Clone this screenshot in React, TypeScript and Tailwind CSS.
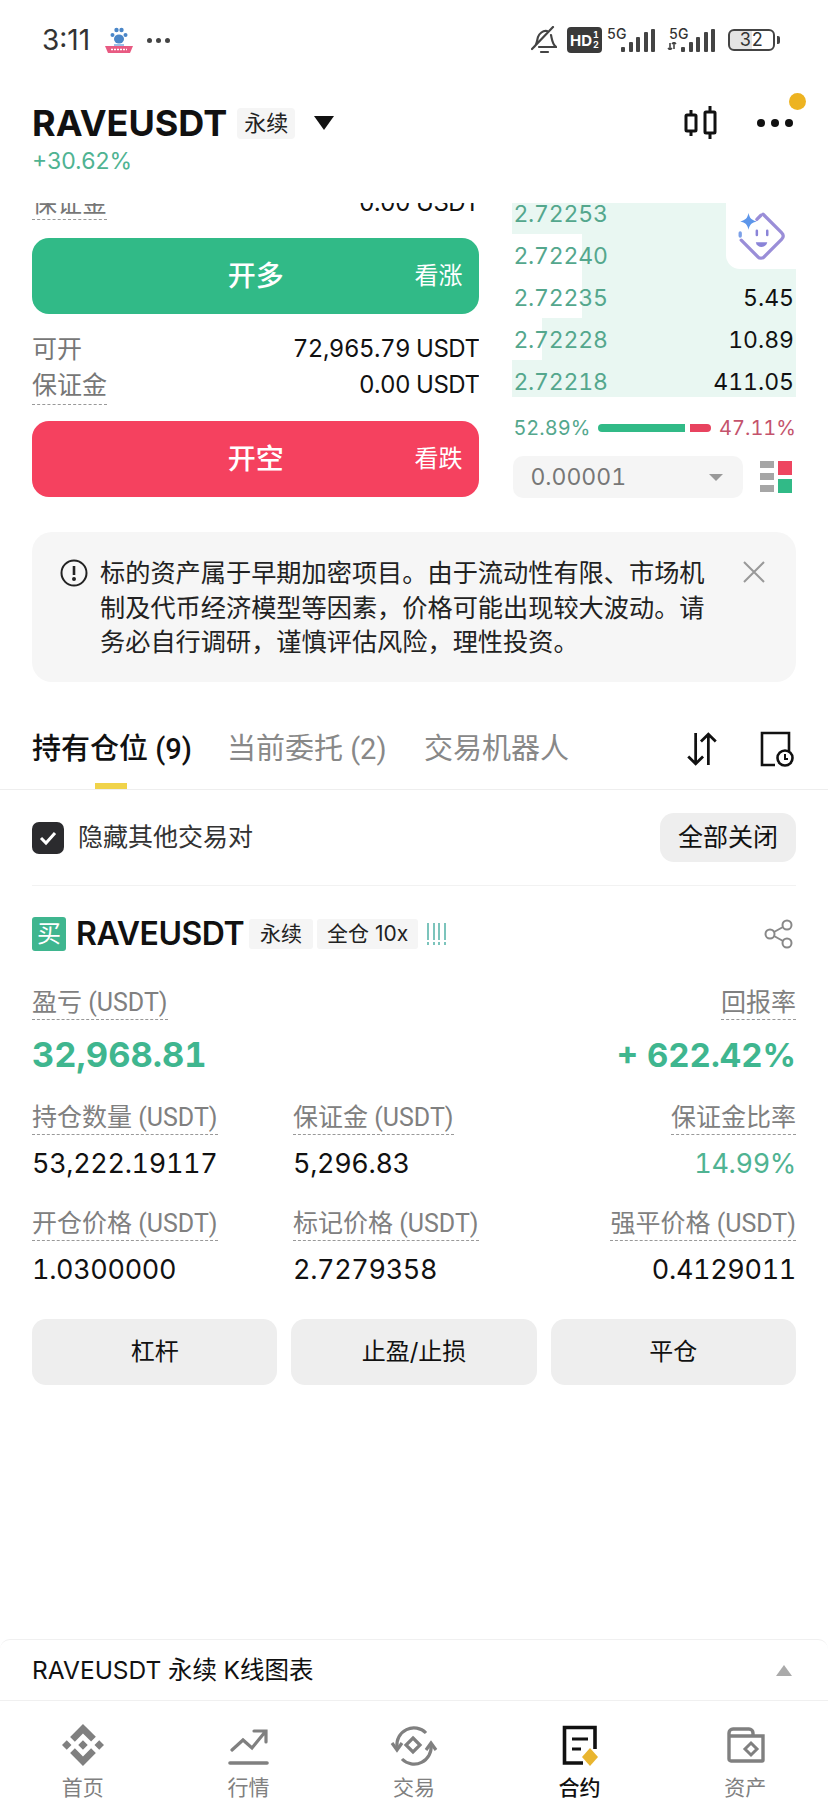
import type { ReactNode } from "react";
import { SiBinance } from "react-icons/si";

const DEPTH_ROWS = [
  { price: "2.72253", qty: "", depth: 284 },
  { price: "2.72240", qty: "", depth: 214 },
  { price: "2.72235", qty: "5.45", depth: 214 },
  { price: "2.72228", qty: "10.89", depth: 254 },
  { price: "2.72218", qty: "411.05", depth: 284 },
];

function StatusBar() {
  return (
    <div className="flex h-[80px] items-center justify-between pl-[42px] pr-[48px] text-[#333]">
      <div className="flex items-center">
        <span className="text-[28px] leading-none normal-nums">3:11</span>
        <svg viewBox="0 0 28 26" className="ml-[15px] h-[26px] w-[28px]">
          <ellipse cx="14" cy="12" rx="5" ry="4.5" fill="#4a86c8" />
          <circle cx="7.5" cy="8" r="2" fill="#4a86c8" />
          <circle cx="11.5" cy="3" r="2.2" fill="#4a86c8" />
          <circle cx="16.5" cy="3" r="2.2" fill="#4a86c8" />
          <circle cx="20.5" cy="8" r="2" fill="#4a86c8" />
          <path d="M9 17h10v2H9Z" fill="#9cc0e8" />
          <path d="M0 19h28l-3 7H3Z" fill="#e85a82" />
          <path d="M6 22.5h16" stroke="#fff" strokeWidth="1.4" strokeDasharray="2 1" />
        </svg>
        <span className="ml-[14px] flex gap-[4px]">
          <i className="size-[5px] rounded-full bg-[#444]" />
          <i className="size-[5px] rounded-full bg-[#444]" />
          <i className="size-[5px] rounded-full bg-[#444]" />
        </span>
      </div>
      <div className="flex items-center">
        <svg viewBox="0 0 26 28" className="h-[28px] w-[26px] fill-none stroke-[#444]" strokeWidth="2.2" strokeLinecap="round">
          <path d="M3 21c3-2 3-7 4-10s5-7 9-6M20 9c1 4 1 9 5 12H8M10 26h7M22 1 1 23" />
        </svg>
        <span className="ml-[10px] flex h-[26px] w-[35px] items-center justify-center gap-[1px] rounded-[4px] bg-[#3a3a3a] font-bold leading-none text-white">
          <span className="text-[15px]">HD</span>
          <span className="flex flex-col text-[9px] leading-[10px]">
            <span>1</span>
            <span>2</span>
          </span>
        </span>
        <div className="ml-[5px]">
          <Signal />
        </div>
        <div className="ml-[12px]">
          <Signal arrows />
        </div>
        <div className="ml-[13px] flex h-[22px] w-[47px] items-center justify-center overflow-hidden rounded-[6px] border-2 border-[#444] bg-[linear-gradient(90deg,#e4e4e4_52%,#fff_52%)] text-[18px] leading-none">
          32
        </div>
        <i className="ml-[2px] h-[8px] w-[3px] rounded-r-[2px] bg-[#444]" />
      </div>
    </div>
  );
}

function Signal({ arrows }: { arrows?: boolean }) {
  return (
    <div className="relative h-[26px] w-[48px]">
      <span className={`absolute top-0 text-[14px] font-medium leading-none ${arrows ? "left-[2px]" : "left-0"}`}>5G</span>
      {arrows ? (
        <svg viewBox="0 0 10 8" className="absolute bottom-[3px] left-0 h-[8px] w-[10px] fill-none stroke-[#444]" strokeWidth="1.6">
          <path d="M3 8V1M1 6l2 2 2-2M7 0v7M5 2l2-2 2 2" />
        </svg>
      ) : null}
      <div className="absolute bottom-[1px] right-0 flex items-end gap-[3.5px]">
        {[5, 10, 15, 20, 23].map((h) => (
          <i key={h} className="w-[4px] rounded-[1px] bg-[#444]" style={{ height: h }} />
        ))}
      </div>
    </div>
  );
}

function Header() {
  return (
    <div className="flex h-[123px] flex-col px-[32px] pt-[23px]">
      <div className="flex h-[40px] items-center">
        <span className="text-[36px] font-bold leading-[40px] text-[#111]">RAVEUSDT</span>
        <span className="ml-[10px] rounded-[4px] bg-[#f5f5f5] px-[7px] text-[22px] leading-[31px] text-[#222]">永续</span>
        <span className="ml-[19px] size-0 border-x-[10px] border-t-[14px] border-x-transparent border-t-[#111]" />
        <div className="relative ml-auto mr-[3px] flex items-center gap-[40px]">
          <svg viewBox="0 0 33 36" className="h-[36px] w-[33px] fill-none stroke-[#111]" strokeWidth="3">
            <rect x="2" y="10" width="10" height="16" rx="1" />
            <path d="M7 5v5M7 26v5" />
            <rect x="21" y="7" width="10" height="21" rx="1" />
            <path d="M26 1v6M26 28v6" />
          </svg>
          <div className="flex gap-[6px]">
            <i className="size-[8px] rounded-full bg-[#111]" />
            <i className="size-[8px] rounded-full bg-[#111]" />
            <i className="size-[8px] rounded-full bg-[#111]" />
          </div>
          <i className="absolute right-[-13px] top-[-12px] size-[17px] rounded-full bg-[#edb321]" />
        </div>
      </div>
      <span className="mt-[4px] text-[23px] leading-[28px] text-[#4fb392] normal-nums">+30.62%</span>
    </div>
  );
}

function TradeButton({ color, action, hint }: { color: string; action: string; hint: string }) {
  return (
    <div className={`relative flex h-[76px] items-center justify-center rounded-[17px] text-white ${color}`}>
      <span className="text-[28px] font-medium leading-none">{action}</span>
      <span className="absolute right-[17px] text-[24px] leading-none">{hint}</span>
    </div>
  );
}

function OrderPanel() {
  return (
    <div className="flex h-[294px] w-[448px] flex-col overflow-hidden">
      <div className="-mt-[16px] flex justify-between leading-[32px]">
        <span className="border-b border-dashed border-[#999] text-[25px] text-[#777]">保证金</span>
        <span className="text-[24px] tracking-[-0.5px] text-[#111]">0.00 USDT</span>
      </div>
      <div className="mt-[18px]">
        <TradeButton color="bg-[#31ba87]" action="开多" hint="看涨" />
      </div>
      <div className="mt-[17px] flex justify-between leading-[36px]">
        <span className="text-[25px] text-[#777]">可开</span>
        <span className="text-[24px] tracking-[-0.5px] text-[#111]">72,965.79 USDT</span>
      </div>
      <div className="flex justify-between leading-[36px]">
        <span className="border-b border-dashed border-[#999] pb-[1px] text-[25px] text-[#777]">保证金</span>
        <span className="text-[24px] tracking-[-0.5px] text-[#111]">0.00 USDT</span>
      </div>
      <div className="mt-[16px]">
        <TradeButton color="bg-[#f5415f]" action="开空" hint="看跌" />
      </div>
    </div>
  );
}

function OrderBook() {
  return (
    <div className="relative w-[284px]">
      <div className="h-[194px] overflow-hidden">
        <div className="-mt-[11px]">
          {DEPTH_ROWS.map((row) => (
            <div key={row.price} className="relative flex h-[42px] items-center justify-between pt-[2px] text-[23px] leading-none">
              <div className="absolute inset-y-0 right-0 bg-[#e9f7f2]" style={{ width: row.depth }} />
              <span className="relative pl-[1px] tracking-[-0.2px] text-[#54a78d]">{row.price}</span>
              <span className="relative pr-[2px] text-[#111]">{row.qty}</span>
            </div>
          ))}
        </div>
      </div>
      <div className="absolute right-0 top-0 flex h-[66px] w-[70px] items-center justify-center rounded-bl-[14px] bg-white">
        <svg viewBox="0 0 50 50" className="size-[52px] fill-none" strokeWidth="3.2" strokeLinecap="round">
          <path d="M27 4 45 22a4 4 0 0 1 0 6L28 45a4 4 0 0 1-6 0L6 29" stroke="#9a8ed8" />
          <path d="M5 22v3" stroke="#7ba0e8" />
          <path d="M21 9l4-4" stroke="#9a8ed8" />
          <path d="M13 3c1 5 3 7 8 8-5 1-7 3-8 8-1-5-3-7-8-8 5-1 7-3 8-8Z" fill="#5d96ea" />
          <path d="M21 20v4M31 20v4" stroke="#8a84d8" strokeWidth="2.4" />
          <path d="M20 31h11c-1 6-10 6-11 0Z" fill="#8a84d8" />
        </svg>
      </div>
      <div className="mt-[19px] flex h-[24px] items-center justify-between pl-[1px] text-[20px] leading-none">
        <span className="text-[#54a78d]">52.89%</span>
        <div className="flex items-center gap-[5px]">
          <i className="h-[8px] w-[87px] rounded-l-full bg-[#31ba87]" />
          <i className="h-[8px] w-[21px] rounded-r-full bg-[#e8435f]" />
        </div>
        <span className="text-[#c4536c]">47.11%</span>
      </div>
      <div className="mt-[16px] flex items-center justify-between">
        <div className="ml-[1px] flex h-[42px] w-[230px] items-center justify-between rounded-[10px] bg-[#f5f5f5] pl-[17px] pr-[20px] text-[23px] leading-none text-[#777]">
          0.00001
          <span className="size-0 border-x-[7px] border-t-[7px] border-x-transparent border-t-[#999]" />
        </div>
        <div className="mr-[4px] flex gap-[4px]">
          <div className="flex flex-col gap-[5px]">
            <i className="h-[7px] w-[14px] bg-[#a6a6a6]" />
            <i className="h-[7px] w-[14px] bg-[#a6a6a6]" />
            <i className="h-[7px] w-[14px] bg-[#a6a6a6]" />
          </div>
          <div className="flex flex-col gap-[4px]">
            <i className="size-[14px] bg-[#ee4560]" />
            <i className="size-[14px] bg-[#31ba87]" />
          </div>
        </div>
      </div>
    </div>
  );
}

function RiskNotice() {
  return (
    <div className="mx-[32px] mt-[34px] flex h-[150px] rounded-[20px] bg-[#f6f6f6] pl-[28px] pr-[30px] pt-[24px]">
      <svg viewBox="0 0 28 28" className="mt-[3px] size-[28px] shrink-0 fill-none stroke-[#222]" strokeWidth="2">
        <circle cx="14" cy="14" r="12.5" />
        <path d="M14 7v9" strokeWidth="2.6" />
        <circle cx="14" cy="20" r="1" fill="#222" />
      </svg>
      <p className="ml-[12px] w-[612px] text-[25.2px] leading-[34.5px] text-[#222]">
        标的资产属于早期加密项目。由于流动性有限、市场机制及代币经济模型等因素，价格可能出现较大波动。请务必自行调研，谨慎评估风险，理性投资。
      </p>
      <svg viewBox="0 0 24 24" className="ml-auto mt-[4px] size-[24px] shrink-0 stroke-[#999]" strokeWidth="2">
        <path d="M2 2l20 20M22 2 2 22" />
      </svg>
    </div>
  );
}

function PositionTabs() {
  return (
    <div className="mt-[43px] border-b border-[#eeeeee]">
      <div className="relative flex h-[64px] items-start px-[32px] font-['Roboto','Noto_Sans_CJK_SC',sans-serif]">
        <span className="w-[195px] text-[29px] font-medium leading-[48px] text-[#111]">持有仓位 (9)</span>
        <span className="w-[197px] text-[29px] leading-[48px] text-[#888]">当前委托 (2)</span>
        <span className="text-[29px] leading-[48px] text-[#888]">交易机器人</span>
        <div className="ml-auto mr-[2px] flex items-center gap-[41px] pt-[6px]">
          <svg viewBox="0 0 32 34" className="h-[36px] w-[34px] fill-none stroke-[#111]" strokeWidth="2.6">
            <path d="M10 2v29M3 24l7 7 7-7M22 32V3M15 10l7-7 7 7" />
          </svg>
          <svg viewBox="0 0 34 36" className="h-[36px] w-[34px] fill-none stroke-[#111]" strokeWidth="2.6">
            <path d="M15 34H2V2h27v18" />
            <circle cx="25" cy="27" r="7.5" />
            <path d="M25 23v5h3" strokeWidth="2" />
          </svg>
        </div>
        <i className="absolute bottom-0 left-[95px] h-[6px] w-[32px] bg-[#f0d34a]" />
      </div>
    </div>
  );
}

function Label({ children }: { children: ReactNode }) {
  return (
    <span className="w-fit border-b border-dashed border-[#999] pb-[2px] font-['Roboto','Noto_Sans_CJK_SC',sans-serif] text-[25px] leading-[28px] text-[#808080]">
      {children}
    </span>
  );
}

function Stat({ label, value, right, tone }: { label: string; value: string; right?: boolean; tone?: string }) {
  return (
    <div className={`flex flex-col ${right ? "items-end" : "items-start"}`}>
      <Label>{label}</Label>
      <span className={`mt-[12px] text-[27px] leading-[34px] tracking-[-0.35px] ${tone ?? "text-[#111]"}`}>{value}</span>
    </div>
  );
}

function PositionCard() {
  return (
    <div className="px-[32px]">
      <div className="flex h-[96px] items-center justify-between border-b border-[#f2f2f2]">
        <div className="flex items-center">
          <span className="flex size-[32px] items-center justify-center rounded-[7px] bg-[#2b2b2e]">
            <svg viewBox="0 0 24 24" className="size-[24px] fill-none stroke-white" strokeWidth="3">
              <path d="M5 12l5 5 9-10" />
            </svg>
          </span>
          <span className="ml-[14px] text-[25px] leading-none text-[#333]">隐藏其他交易对</span>
        </div>
        <span className="flex h-[49px] w-[136px] items-center justify-center rounded-[14px] bg-[#eeeeee] text-[25px] text-[#111]">全部关闭</span>
      </div>

      <div className="mt-[31px] flex h-[34px] items-center">
        <span className="flex size-[34px] items-center justify-center rounded-[3px] bg-[#3fb68f] text-[24px] leading-none text-white">买</span>
        <span className="ml-[10px] text-[32px] font-semibold leading-none tracking-[-0.5px] text-[#111]">RAVEUSDT</span>
        <span className="ml-[5px] rounded-[3px] bg-[#f5f5f5] px-[11px] py-[1px] text-[21px] leading-[28px] text-[#222]">永续</span>
        <span className="ml-[4px] rounded-[3px] bg-[#f5f5f5] px-[10px] py-[1px] text-[21px] leading-[28px] text-[#222] normal-nums">全仓 10x</span>
        <span className="ml-[9px] flex gap-[3.5px]">
          {[0, 1, 2, 3].map((bar) => (
            <span key={bar} className="flex w-[2px] flex-col gap-[2px]">
              <i className="h-[17px] bg-[#7cc4bc]" />
              <i className="h-[3px] bg-[#7cc4bc]" />
            </span>
          ))}
        </span>
        <svg viewBox="0 0 30 30" className="ml-auto mr-[2px] size-[30px] fill-none stroke-[#888]" strokeWidth="2">
          <circle cx="6" cy="15" r="4.5" />
          <circle cx="23" cy="6" r="4.5" />
          <circle cx="23" cy="24" r="4.5" />
          <path d="M10 13l9-5M10 17l9 5" />
        </svg>
      </div>

      <div className="mt-[38px] flex justify-between">
        <Label>盈亏 (USDT)</Label>
        <Label>回报率</Label>
      </div>
      <div className="mt-[13px] flex items-center justify-between font-bold leading-[44px] text-[#3fb68f]">
        <span className="text-[34.5px]">32,968.81</span>
        <span className="text-[33px]">+ 622.42%</span>
      </div>

      <div className="mt-[27px] grid grid-cols-[261px_1fr_auto] gap-y-[29px]">
        <Stat label="持仓数量 (USDT)" value="53,222.19117" />
        <Stat label="保证金 (USDT)" value="5,296.83" />
        <Stat label="保证金比率" value="14.99%" right tone="text-[#4fb392]" />
        <Stat label="开仓价格 (USDT)" value="1.0300000" />
        <Stat label="标记价格 (USDT)" value="2.7279358" />
        <Stat label="强平价格 (USDT)" value="0.4129011" right />
      </div>

      <div className="mt-[32px] grid grid-cols-3 gap-[14px]">
        {["杠杆", "止盈/止损", "平仓"].map((action) => (
          <span key={action} className="flex h-[66px] items-center justify-center rounded-[14px] bg-[#eeeeee] text-[24px] text-[#111]">
            {action}
          </span>
        ))}
      </div>
    </div>
  );
}

function ChartBar() {
  return (
    <div className="flex h-[62px] items-center justify-between rounded-t-[10px] border-y border-[#f0f0f0] pl-[32px] pr-[36px]">
      <span className="text-[24.5px] leading-none text-[#111]">RAVEUSDT 永续 K线图表</span>
      <span className="size-0 border-x-[8px] border-b-[11px] border-x-transparent border-b-[#aaaaaa]" />
    </div>
  );
}

function Glyph({ children }: { children: ReactNode }) {
  return (
    <svg viewBox="0 0 42 42" className="size-[42px] overflow-visible fill-none">
      {children}
    </svg>
  );
}

const NAV_ITEMS: { label: string; active?: boolean; icon: ReactNode }[] = [
  {
    label: "首页",
    icon: <SiBinance className="size-[42px] text-[#808080]" />,
  },
  {
    label: "行情",
    icon: (
      <Glyph>
        <g stroke="#808080" strokeWidth="3.2" strokeLinecap="round">
          <path d="M5 26 16 16l9 8L38 8M27 7h12v11" />
          <path d="M3 39h37" strokeWidth="3.6" />
        </g>
      </Glyph>
    ),
  },
  {
    label: "交易",
    icon: (
      <Glyph>
        <g stroke="#808080" strokeWidth="3.2">
          <path d="M4 23A17 17 0 0 1 33 9M38 21A17 17 0 0 1 9 35" />
          <path d="M-1 19l5 7 5-7M33 26l5-7 5 7" />
          <path d="M20 14l7 7-7 7-7-7Z" />
        </g>
      </Glyph>
    ),
  },
  {
    label: "合约",
    active: true,
    icon: (
      <Glyph>
        <path d="M24 39H5.5V3.5H36V25" stroke="#111" strokeWidth="3.6" />
        <path d="M13 15h16M13 25h9" stroke="#111" strokeWidth="3.2" />
        <path d="M31 24l8 9-8 9-8-9Z" fill="#e9b52f" />
      </Glyph>
    ),
  },
  {
    label: "资产",
    icon: (
      <Glyph>
        <g stroke="#808080" strokeWidth="3.4">
          <path d="M5 9a4 4 0 0 1 4-4h16a4 4 0 0 1 4 4v3h10v24a1 1 0 0 1-1 1H7a2 2 0 0 1-2-2ZM5 12h24" />
          <path d="M27 19l6 6-6 6-6-6Z" strokeWidth="3" />
        </g>
      </Glyph>
    ),
  },
];

function BottomNav() {
  return (
    <div className="grid h-[112px] grid-cols-5 pt-[23px]">
      {NAV_ITEMS.map((item) => (
        <div key={item.label} className="flex flex-col items-center">
          {item.icon}
          <span className={`mt-[11px] text-[21px] leading-none ${item.active ? "font-medium text-[#111]" : "text-[#808080]"}`}>
            {item.label}
          </span>
        </div>
      ))}
    </div>
  );
}

export default function App() {
  return (
    <div className="flex h-[1813px] w-[828px] flex-col overflow-hidden bg-white font-['Inter','Noto_Sans_CJK_SC',sans-serif] tabular-nums">
      <StatusBar />
      <Header />
      <div className="flex gap-[33px] px-[32px]">
        <OrderPanel />
        <OrderBook />
      </div>
      <RiskNotice />
      <PositionTabs />
      <PositionCard />
      <div className="flex-1" />
      <ChartBar />
      <BottomNav />
    </div>
  );
}
